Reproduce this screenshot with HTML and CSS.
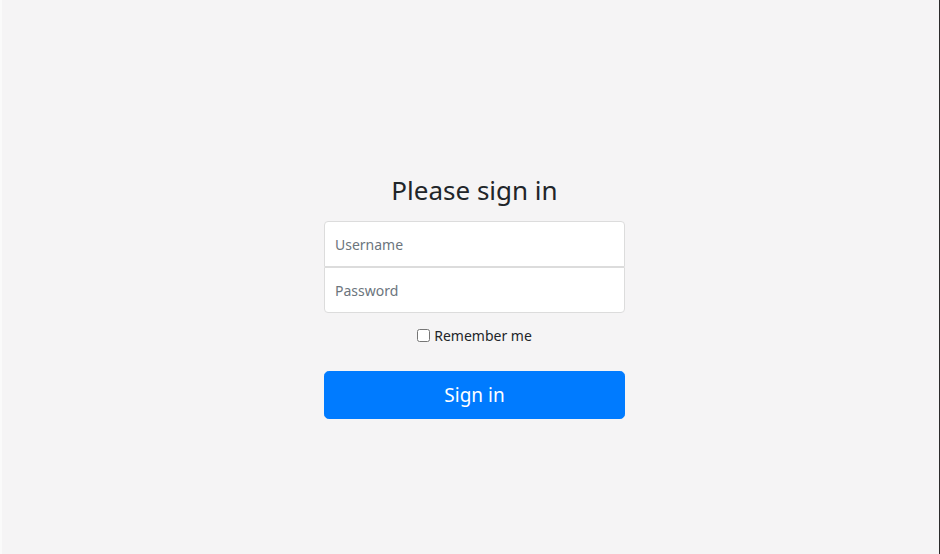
FILE: index.html
```html
<!DOCTYPE html>
<html lang="en">
<head>
<meta charset="utf-8">
<title>Please sign in</title>
<link rel="stylesheet" href="styles.css">
</head>
<body>
<div class="page">
  <form class="form-signin">
    <h2 class="heading">Please sign in</h2>
    <input class="field field-top" type="text" placeholder="Username">
    <input class="field field-bottom" type="password" placeholder="Password">
    <p class="remember"><input class="check" type="checkbox"><span>Remember me</span></p>
    <button class="btn" type="button">Sign in</button>
  </form>
</div>
</body>
</html>
```

FILE: styles.css
```css
* { box-sizing: border-box; }
html, body {
  margin: 0;
  height: 100%;
}
body {
  background: #f5f4f5;
  font-family: "Noto Sans", "Open Sans", sans-serif;
  color: #212529;
  border-left: 2px solid #fafafa;
  border-right: 1px solid #2a2a2a;
}
.page {
  height: 100%;
  display: flex;
  justify-content: center;
  padding-left: 8px;
  padding-top: 175px;
}
.form-signin {
  width: 301px;
  display: flex;
  flex-direction: column;
}
.heading {
  margin: 0 0 15px;
  font-size: 26px;
  font-weight: 400;
  line-height: 1.2;
  text-align: center;
  color: #212529;
}
.field {
  display: block;
  width: 100%;
  height: 46px;
  padding: 10px;
  font-family: inherit;
  font-size: 14px;
  color: #495057;
  background: #fff;
  border: 1px solid #dcdcdc;
  border-radius: 4px;
  outline: none;
}
.field::placeholder { color: #6c757d; }
.field-top {
  border-bottom-left-radius: 0;
  border-bottom-right-radius: 0;
}
.field-bottom {
  margin-top: 0;
  border-top-left-radius: 0;
  border-top-right-radius: 0;
}
.remember {
  margin: 12px 0 0;
  display: flex;
  align-items: center;
  justify-content: center;
  font-size: 14px;
  line-height: 21px;
  color: #212529;
}
.check {
  margin: 0 4px 0 0;
  width: 13px;
  height: 13px;
}
.btn {
  margin-top: 25px;
  height: 48px;
  width: 100%;
  border: 1px solid #007bff;
  border-radius: 4.8px;
  background: #007bff;
  color: #fff;
  font-family: inherit;
  font-size: 19px;
  cursor: pointer;
}
```
